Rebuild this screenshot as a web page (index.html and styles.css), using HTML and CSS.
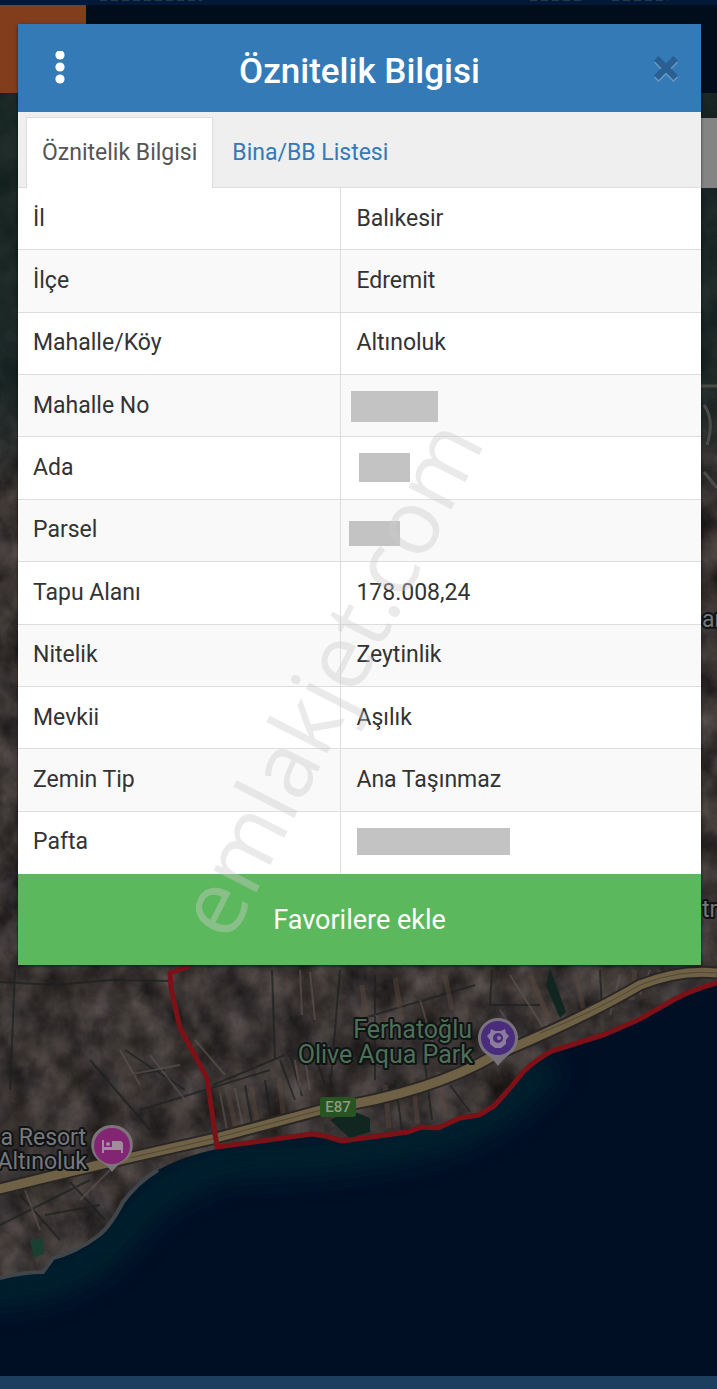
FILE: index.html
```html
<!DOCTYPE html>
<html lang="tr">
    <head>
        <meta charset="utf-8">
        <meta name="viewport" content="width=device-width, initial-scale=1">
        <title>Öznitelik Bilgisi</title>
        <link rel="stylesheet" href="styles.css">
    </head>
    <body>

        <!-- harita -->
        <svg class="map" viewBox="0 0 717 1389" preserveAspectRatio="xMidYMin slice" aria-hidden="true">
            <defs>
                <filter id="terrain" x="0" y="0" width="100%" height="100%" color-interpolation-filters="sRGB">
                    <feTurbulence type="fractalNoise" baseFrequency="0.035 0.03" numOctaves="6" seed="8"/>
                    <feColorMatrix values="0.3 0.12 0 0 0.01  0.27 0.12 0 0 0.005  0.25 0.12 0.04 0 -0.01  0 0 0 0 1"/>
                </filter>
                <clipPath id="land">
                    <path d="M0 93H717V984Q688 988 668 1001Q640 1019 608 1031Q570 1043 548 1052Q523 1070 508 1092Q494 1111 477 1115L459 1117L438 1128L414 1129L345 1140L325 1134Q260 1140 217 1149Q183 1156 158 1170Q138 1182 123 1202Q110 1227 98 1236Q75 1253 53 1258L43 1272Q24 1272 0 1278Z"/>
                </clipPath>
                <linearGradient id="forest" x1="0" y1="0" x2="0" y2="1">
                    <stop offset="0" stop-color="#0b211e" stop-opacity=".7"/>
                    <stop offset=".75" stop-color="#0b211e" stop-opacity=".6"/>
                    <stop offset="1" stop-color="#0b211e" stop-opacity="0"/>
                </linearGradient>
                <filter id="soften" x="-20%" y="-30%" width="140%" height="160%">
                    <feGaussianBlur stdDeviation="14"/>
                </filter>
            </defs>

            <rect width="717" height="1389" fill="#010f25"/>
            <path d="M-20 1290Q70 1290 120 1235Q150 1185 230 1160Q350 1160 430 1138Q500 1120 550 1062" fill="none" stroke="#052630" stroke-width="36" opacity=".8" filter="url(#soften)"/>

            <g clip-path="url(#land)">
                <rect y="93" width="717" height="1200" filter="url(#terrain)"/>
                <rect y="93" width="717" height="400" fill="url(#forest)"/>
                <path d="M0 982L55 985L110 980L168 981M15 970L10 1090M90 1060L150 1130M125 1050L185 1090M128 1075L165 1070M140 1110L270 1070M213 1085L285 1055M272 970L275 1060M340 970L330 1090M375 975V1080M357 1020L475 985M492 970L490 1005H540M600 970L602 1010M280 1060L295 1100M290 1055L302 1096M315 1055L325 1085M245 1085L253 1130M265 1080L272 1125M395 1080L402 1130M425 1065L432 1120M450 1085L470 1112M20 1195L60 1240M0 1225L90 1180M70 1182L105 1220M45 1215L100 1205" fill="none" stroke="#1d1f20" stroke-width="2" opacity=".7"/>
                <path d="M300 970L302 1015M310 972L315 1020M295 1060L300 1092M305 1060L310 1090M220 1093L228 1135M235 1088L244 1132M120 1050L140 1085M150 1055L185 1100M195 1040L225 1075M128 1075L180 1065M420 1000L435 1050M500 1010L520 1040M510 975L545 1030M620 975L610 1015M650 970L640 995M25 1190L40 1230M80 1200L110 1170" fill="none" stroke="#5d5552" stroke-width="2" opacity=".6"/>
                <path d="M228 1092L236 1130M251 1086L258 1128M279 1078L284 1120M385 1085L389 1128M412 1075L418 1124M438 1072L446 1118M362 985L368 1030M395 978L402 1020M445 975L452 1010M530 975L550 1020M575 972L585 1015M635 970L632 1000M660 970L656 985" fill="none" stroke="#5c463c" stroke-width="5" opacity=".45"/>
                <path d="M550 968L566 1012L560 1018L546 985ZM330 1120L350 1110L370 1118V1132L350 1138Z" fill="#112620"/>
                <path d="M30 1240L43 1238L44 1254L34 1258Z" fill="#1b4033"/>
                <path d="M701 386H717M704 405Q715 420 707 445M704 472L717 488" fill="none" stroke="#4b4c49" stroke-width="3"/>
            </g>
            <path d="M0 1278Q24 1272 43 1272L53 1258Q75 1253 98 1236Q110 1227 123 1202Q138 1182 158 1170" fill="none" stroke="#40454a" stroke-width="4"/>

            <!-- karayolu -->
            <path d="M-5 1190Q100 1164 212 1139L325 1109Q430 1093 495 1055Q580 1020 640 985Q680 969 717 973" fill="none" stroke="#292625" stroke-width="13"/>
            <path d="M-5 1190Q100 1164 212 1139L325 1109Q430 1093 495 1055Q580 1020 640 985Q680 969 717 973" fill="none" stroke="#6e6145" stroke-width="9"/>
            <path d="M130 1158L212 1139L325 1109M540 1033Q590 1014 640 985Q680 969 717 973" fill="none" stroke="#514937" stroke-width="1"/>

            <!-- parsel sınırı -->
            <path d="M190 966L170 973L171 988L180 1028L207 1078L217 1147L312 1134L325 1136L342 1141L408 1132L422 1127L438 1128L460 1118L479 1115L494 1106Q510 1089 523 1072Q538 1058 552 1051L606 1034L640 1019L675 999Q695 989 717 983" fill="none" stroke="#7c1118" stroke-width="5" stroke-linejoin="round"/>

            <rect x="320" y="1097" width="36" height="20" rx="3" fill="#285421"/>
            <text class="map-road" x="338" y="1112" text-anchor="middle">E87</text>

            <g class="map-label map-label-park" text-anchor="end">
                <text x="472" y="1038">Ferhatoğlu</text>
                <text x="473" y="1063">Olive Aqua Park</text>
            </g>
            <g class="map-label" text-anchor="end">
                <text x="86" y="1145">a Resort</text>
                <text x="87" y="1169">Altınoluk</text>
            </g>
            <g class="map-label">
                <text x="702" y="627">an</text>
                <text x="702" y="917">tri</text>
            </g>

            <path d="M498 1018A20 20 0 0 1 510 1054Q502 1060 498 1066Q494 1060 486 1054A20 20 0 0 1 498 1018Z" fill="#77727d"/>
            <circle cx="498" cy="1038" r="17" fill="#492c7b"/>
            <g fill="#8b7b9c">
                <path fill-rule="evenodd" d="M491 1029L495 1031H501L505 1029L506 1033L509 1036L506 1040V1044L501 1048H495L490 1044V1040L487 1036L490 1033ZM498 1033A5 5 0 1 0 498 1043A5 5 0 1 0 498 1033Z"/>
                <circle cx="499" cy="1038" r="2"/>
            </g>

            <path d="M112 1125A20 20 0 0 1 126 1160Q117 1165 112 1172Q107 1165 98 1160A20 20 0 0 1 112 1125Z" fill="#7d737a"/>
            <circle cx="112" cy="1146" r="18" fill="#822673"/>
            <path d="M102 1140H104V1147H112V1141H120Q123 1141 123 1144V1153H121V1150H104V1153H102Z" fill="#a28b9d"/>
            <circle cx="108" cy="1144" r="2" fill="#a28b9d"/>

            <!-- üst ve alt çubuklar -->
            <rect width="717" height="93" fill="#010d1b"/>
            <rect width="717" height="5" fill="#021a37"/>
            <path d="M100 0H202M530 0H582M612 0H668" stroke="#27384b" stroke-width="2" stroke-dasharray="7 4"/>
            <rect y="5" width="86" height="88" fill="#823e1c"/>
            <rect x="690" y="118" width="27" height="70" fill="#848484"/>
            <rect y="1376" width="717" height="13" fill="#1c3f60"/>
        </svg>

        <main class="dialog">
            <header class="dialog-header">
                <button class="icon-button menu-button" type="button" aria-label="Menü">
                    <svg width="10" height="34" viewBox="0 0 10 34" fill="#fff">
                        <circle cx="5" cy="4" r="4.6"/>
                        <circle cx="5" cy="16" r="4.6"/>
                        <circle cx="5" cy="28" r="4.6"/>
                    </svg>
                </button>
                <h1>Öznitelik Bilgisi</h1>
                <button class="icon-button close-button" type="button" aria-label="Kapat">
                    <svg width="28" height="28" viewBox="0 0 26 26">
                        <path d="M4 6L22 24M22 6L4 24" stroke="#6798c3" stroke-width="6"/>
                        <path d="M4 4L22 22M22 4L4 22" stroke="#295f91" stroke-width="6"/>
                    </svg>
                </button>
            </header>

            <nav class="tabs">
                <a class="active" href="#oznitelik">Öznitelik Bilgisi</a>
                <a href="#bina">Bina/BB Listesi</a>
            </nav>

            <table id="oznitelik">
                <tbody>
                    <tr><th scope="row">İl</th><td>Balıkesir</td></tr>
                    <tr><th scope="row">İlçe</th><td>Edremit</td></tr>
                    <tr><th scope="row">Mahalle/Köy</th><td>Altınoluk</td></tr>
                    <tr><th scope="row">Mahalle No</th><td><span class="redacted redacted-mahalle"></span></td></tr>
                    <tr><th scope="row">Ada</th><td><span class="redacted redacted-ada"></span></td></tr>
                    <tr><th scope="row">Parsel</th><td><span class="redacted redacted-parsel"></span></td></tr>
                    <tr><th scope="row">Tapu Alanı</th><td>178.008,24</td></tr>
                    <tr><th scope="row">Nitelik</th><td>Zeytinlik</td></tr>
                    <tr><th scope="row">Mevkii</th><td>Aşılık</td></tr>
                    <tr><th scope="row">Zemin Tip</th><td>Ana Taşınmaz</td></tr>
                    <tr><th scope="row">Pafta</th><td><span class="redacted redacted-pafta"></span></td></tr>
                </tbody>
            </table>

            <button class="favorite" type="button">Favorilere ekle</button>

            <svg class="watermark" viewBox="0 0 683 941">
                <text transform="translate(212 920) rotate(-63)">emlakjet.com</text>
            </svg>
        </main>

    </body>
</html>
```

FILE: styles.css
```css
* {
    box-sizing: border-box;
}

body {
    margin: 0;
    min-height: 100vh;
    padding: 24px 16px 24px 18px;
    position: relative;
    overflow-x: hidden;
    font-family: Roboto, "Liberation Sans", sans-serif;
    font-size: 23px;
    line-height: 32px;
    color: #333;
    background-color: #010f25;
}

button {
    font-family: inherit;
    border: none;
    cursor: pointer;
}

/* harita */
.map {
    position: absolute;
    top: 0;
    left: 0;
    width: 100%;
    height: 100%;
}

.map-label {
    font-size: 23px;
    fill: #77787a;
    stroke: #101315;
    stroke-width: 4px;
    stroke-linejoin: round;
    paint-order: stroke;
}

.map-label-park {
    font-size: 25px;
    fill: #4d7057;
}

.map-road {
    font-size: 15px;
    font-weight: 500;
    fill: #8a9c86;
}

/* pencere */
.dialog {
    position: relative;
    background-color: #fff;
    box-shadow: 0 1px 3px rgba(0, 0, 0, 0.6);
}

.dialog-header {
    display: grid;
    grid-template-columns: 48px 1fr 48px;
    align-items: center;
    height: 88px;
    padding: 0 11px 0 18px;
    background-color: #337ab7;
}

.dialog-header h1 {
    margin: 0;
    padding-top: 8px;
    padding-right: 7px;
    font-size: 35px;
    line-height: 40px;
    font-weight: 500;
    text-align: center;
    color: #fff;
}

.icon-button {
    display: flex;
    align-items: center;
    justify-content: center;
    height: 48px;
    padding: 0;
    background: none;
}

/* sekmeler */
.tabs {
    display: flex;
    padding: 5px 8px 0;
    background-color: #efefef;
    border-bottom: 1px solid #ddd;
}

.tabs a {
    padding: 19px 15px;
    margin-right: 3px;
    margin-bottom: -1px;
    border: 1px solid transparent;
    border-bottom: none;
    color: #337ab7;
    text-decoration: none;
}

.tabs .active {
    color: #555;
    background-color: #fff;
    border-color: #ddd;
}

/* öznitelik tablosu */
table {
    width: 100%;
    height: 686px;
    table-layout: fixed;
    border-collapse: separate;
    border-spacing: 0;
}

th,
td {
    position: relative;
    padding: 0 15px;
    text-align: left;
    font-weight: 400;
    border-bottom: 1px solid #ddd;
}

th {
    width: 47.2%;
}

td {
    border-left: 1px solid #ddd;
}

tr:nth-child(even) {
    background-color: #f9f9f9;
}

tr:last-child th,
tr:last-child td {
    border-bottom-color: transparent;
}

.redacted {
    position: absolute;
    background-color: #c3c3c3;
}

.redacted-mahalle {
    top: 16px;
    left: 10px;
    width: 87px;
    height: 31px;
}

.redacted-ada {
    top: 16px;
    left: 18px;
    width: 51px;
    height: 29px;
}

.redacted-parsel {
    top: 21px;
    left: 8px;
    width: 51px;
    height: 25px;
}

.redacted-pafta {
    top: 16px;
    left: 16px;
    width: 153px;
    height: 27px;
}

.favorite {
    display: block;
    width: 100%;
    padding: 26px 15px 25px;
    font-size: 27px;
    line-height: 40px;
    color: #fff;
    background-color: #5cb85c;
}

.watermark {
    position: absolute;
    top: 0;
    left: 0;
    width: 100%;
    height: 100%;
    pointer-events: none;
    font-family: "Open Sans", sans-serif;
    font-size: 90px;
    fill: #ccc;
    opacity: 0.4;
}
```
